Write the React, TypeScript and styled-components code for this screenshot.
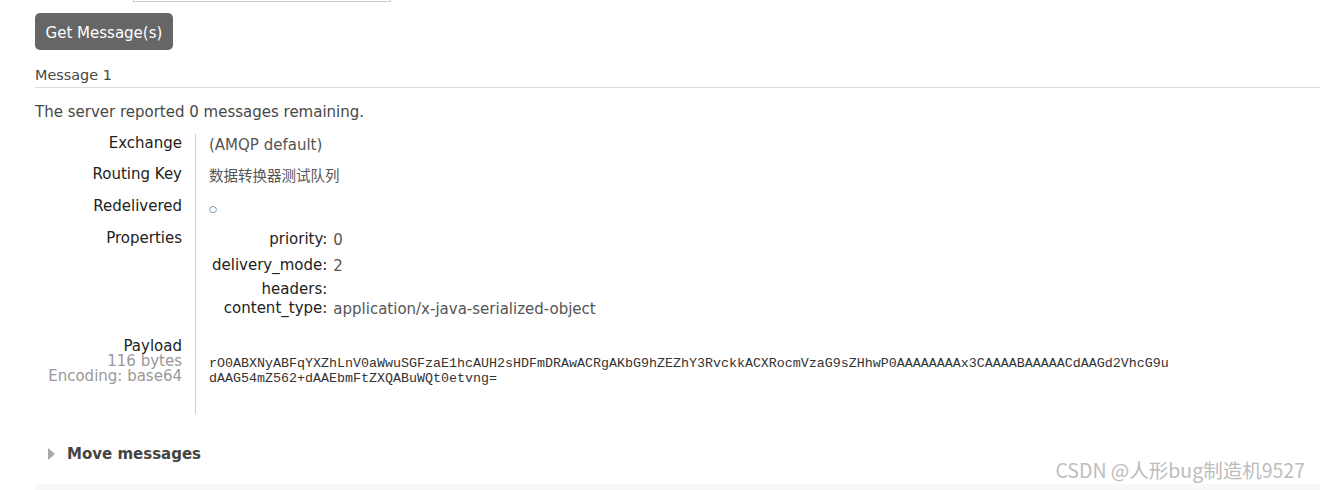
import React from "react";
import styled, { createGlobalStyle } from "styled-components";

const GlobalStyle = createGlobalStyle`
  html, body { margin: 0; padding: 0; background: #fff; }
  body {
    font-family: "DejaVu Sans", Verdana, sans-serif;
    font-size: 15px;
    color: #484848;
    overflow: hidden;
  }
`;

const Page = styled.div`
  position: relative;
  width: 1320px;
  height: 490px;
  overflow: hidden;
  padding-left: 35px;
  box-sizing: border-box;
  display: flex;
  flex-direction: column;
  align-items: stretch;
  & > * {
    flex-shrink: 0;
  }
`;

const FormRow = styled.div`
  display: flex;
  padding-left: 98px;
  margin-top: -22px;
`;

const TextInput = styled.input`
  width: 258px;
  height: 24px;
  box-sizing: border-box;
  border: 1px solid #ccc;
  background: #fff;
  margin: 0;
  padding: 0 4px;
`;

const Button = styled.button`
  align-self: flex-start;
  margin-top: 11px;
  height: 37px;
  width: 138px;
  border: none;
  border-radius: 5px;
  background: #666;
  color: #fff;
  font-family: "DejaVu Sans", Verdana, sans-serif;
  font-size: 15px;
  padding: 2px 0 0;
  cursor: pointer;
`;

const SectionTitle = styled.h3`
  margin: 17px 0 0;
  font-weight: normal;
  font-size: 14.4px;
  line-height: 16px;
  color: #484848;
  padding-bottom: 4px;
  border-bottom: 1px solid #ddd;
`;

const Note = styled.p`
  margin: 15px 0 0;
  font-size: 15px;
  line-height: 18px;
  color: #484848;
`;

const Facts = styled.div`
  margin-top: 13px;
  display: grid;
  grid-template-columns: 161px 1fr;
`;

const Label = styled.div<{ $pt?: number; $pb?: number }>`
  box-sizing: border-box;
  text-align: right;
  padding: ${(p) => p.$pt ?? 0}px 13px ${(p) => p.$pb ?? 0}px 0;
  border-right: 1px solid #ccc;
  color: #222;
  line-height: 18px;
`;

const SubLabel = styled.div<{ $muted?: boolean }>`
  line-height: 15px;
  color: ${(p) => (p.$muted ? "#999" : "#222")};
`;

const Value = styled.div<{ $pt?: number; $pb?: number }>`
  padding: ${(p) => p.$pt ?? 0}px 0 ${(p) => p.$pb ?? 0}px 13px;
  line-height: 18px;
  color: #555;
`;

const Cjk = styled.span`
  font-family: "DejaVu Sans", "Noto Sans CJK SC", sans-serif;
  font-size: 14.5px;
  color: #555;
`;

const Bool = styled.span`
  display: inline-block;
  font-size: 9px;
  line-height: 18px;
  padding-top: 4px;
  color: #555;
`;

const PropTable = styled.div`
  display: grid;
  grid-template-columns: auto 1fr;
  column-gap: 6px;
  justify-content: start;
  padding-left: 3px;
`;

const PropKey = styled.div<{ $pb: number }>`
  text-align: right;
  color: #222;
  line-height: 18px;
  padding-bottom: ${(p) => p.$pb}px;
  white-space: nowrap;
`;

const PropVal = styled.div<{ $pb: number }>`
  color: #555;
  line-height: 18px;
  padding-top: 1px;
  padding-bottom: ${(p) => p.$pb - 1}px;
  white-space: nowrap;
`;

const Payload = styled.pre`
  margin: 0;
  font-family: "Liberation Mono", "Courier New", monospace;
  font-size: 13.33px;
  line-height: 15px;
  color: #333;
  white-space: pre;
`;

const Collapsible = styled.div`
  margin-top: 31px;
  display: flex;
  align-items: center;
  padding-left: 13px;
  gap: 12px;
  height: 18px;
`;

const Arrow = styled.span`
  width: 0;
  height: 0;
  border-top: 6.5px solid transparent;
  border-bottom: 6.5px solid transparent;
  border-left: 7px solid #aaa;
`;

const CollapsibleTitle = styled.span`
  font-weight: bold;
  font-size: 15px;
  color: #444;
`;

const NextSection = styled.div`
  margin-top: 21px;
  height: 30px;
  background: #f8f8f8;
`;

const Watermark = styled.div`
  position: absolute;
  right: 15px;
  top: 456px;
  font-family: "Noto Sans CJK SC", sans-serif;
  font-size: 19.5px;
  line-height: 28px;
  color: #bdbdbd;
`;

const props = [
  { k: "priority:", v: "0", pb: 8 },
  { k: "delivery_mode:", v: "2", pb: 6 },
  { k: "headers:", v: "", pb: 1 },
  { k: "content_type:", v: "application/x-java-serialized-object", pb: 0 },
];

export default function App() {
  return (
    <>
      <GlobalStyle />
      <Page>
        <FormRow>
          <TextInput readOnly value="" />
        </FormRow>
        <Button>Get Message(s)</Button>
        <SectionTitle>Message 1</SectionTitle>
        <Note>The server reported 0 messages remaining.</Note>
        <Facts>
          <Label $pb={13}>Exchange</Label>
          <Value $pt={2}>(AMQP default)</Value>

          <Label $pb={13}>Routing Key</Label>
          <Value $pt={2}>
            <Cjk>数据转换器测试队列</Cjk>
          </Value>

          <Label $pt={1} $pb={13}>Redelivered</Label>
          <Value>
            <Bool>○</Bool>
          </Value>

          <Label $pt={1}>Properties</Label>
          <Value $pt={2} $pb={18}>
            <PropTable>
              {props.map((p) => (
                <React.Fragment key={p.k}>
                  <PropKey $pb={p.pb}>{p.k}</PropKey>
                  <PropVal $pb={p.pb}>{p.v}</PropVal>
                </React.Fragment>
              ))}
            </PropTable>
          </Value>

          <Label $pt={3} $pb={30}>
            <SubLabel>Payload</SubLabel>
            <SubLabel $muted>116 bytes</SubLabel>
            <SubLabel $muted>Encoding: base64</SubLabel>
          </Label>
          <Value $pt={20} $pb={27}>
            <Payload>
              {"rO0ABXNyABFqYXZhLnV0aWwuSGFzaE1hcAUH2sHDFmDRAwACRgAKbG9hZEZhY3RvckkACXRocmVzaG9sZHhwP0AAAAAAAAx3CAAAABAAAAACdAAGd2VhcG9u\ndAAG54mZ562+dAAEbmFtZXQABuWQt0etvng="}
            </Payload>
          </Value>
        </Facts>
        <Collapsible>
          <Arrow />
          <CollapsibleTitle>Move messages</CollapsibleTitle>
        </Collapsible>
        <NextSection />
        <Watermark>CSDN @人形bug制造机9527</Watermark>
      </Page>
    </>
  );
}
